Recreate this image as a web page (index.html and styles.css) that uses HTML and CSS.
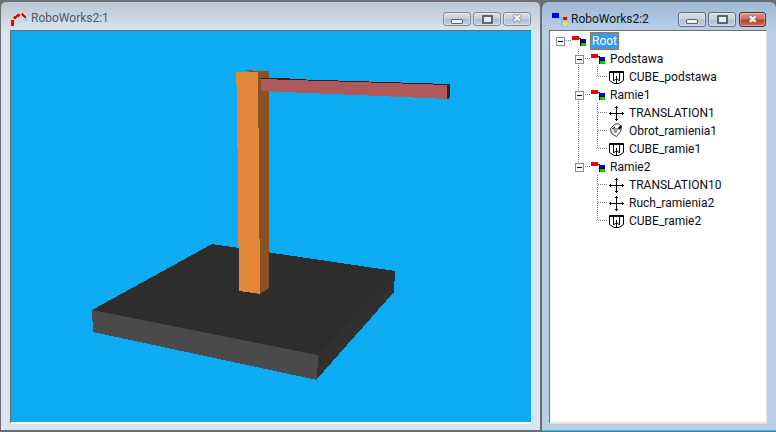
FILE: index.html
```html
<!DOCTYPE html>
<html lang="pl">
<head>
<meta charset="utf-8">
<title>RoboWorks2</title>
<link rel="stylesheet" href="styles.css">
</head>
<body>
<svg class="defs" width="0" height="0" aria-hidden="true">
  <symbol id="flag" viewBox="0 0 16 18">
    <rect x="1" y="4" width="7" height="4" fill="#f00000"/>
    <rect x="8" y="6" width="2" height="1" fill="#000"/>
    <rect x="9" y="6" width="1" height="8" fill="#000"/>
    <rect x="10" y="7" width="5" height="3" fill="#0000e0"/>
    <rect x="10" y="10" width="5" height="1" fill="#000"/>
    <rect x="10" y="11" width="5" height="3" fill="#00d000"/>
  </symbol>
  <symbol id="cross" viewBox="0 0 16 18">
    <path d="M8.500 2V16M2 9.500H15" stroke="#000" fill="none"/>
    <path d="M7 3H10V4H7ZM8 2H9V3H8ZM7 15H10V16H7ZM8 16H9V17H8ZM2 8V11H3V8ZM1 9V10H2V9ZM14 8V11H15V8ZM15 9V10H16V9Z" fill="#000"/>
  </symbol>
  <symbol id="cube" viewBox="0 0 16 18">
    <path d="M1.500 3.500H15.500V12.500L11 15.500H6L1.500 12.500Z" fill="#fff" stroke="#000"/>
    <path d="M1 4.500H16" stroke="#000"/>
    <path d="M5.500 4V13M11.500 4V13M8.500 8V15M5.500 13L8.500 10.500L11.500 13" stroke="#000" fill="none"/>
  </symbol>
  <symbol id="rot" viewBox="0 0 16 18">
    <path d="M6.500 2.500L10.500 1.500L13.500 5.500L12.500 9.500L8.500 14.500L3.500 11.500L2.500 6.500Z" fill="#fff" stroke="#333"/>
    <path d="M5 6H10L9 11H6Z" fill="#999"/>
    <path d="M10 6L13 3L14 5L11 8Z" fill="#000"/>
    <path d="M4 7L7 5" stroke="#000"/>
  </symbol>
</svg>

<section class="window inactive">
  <header class="titlebar">
    <svg class="app-icon" width="17" height="16" viewBox="0 0 17 16" aria-hidden="true" shape-rendering="crispEdges">
      <path d="M2 7L9 2" stroke="#f00000" stroke-width="2.500"/>
      <path d="M11 2L15 6" stroke="#f00000" stroke-width="2"/>
      <rect x="0" y="8" width="3" height="6" fill="#f00000"/>
      <rect x="0" y="6" width="3" height="2" fill="#f0e020"/>
      <rect x="8" y="0" width="3" height="2" fill="#f0e020"/>
      <path d="M14 6h1v1h1v2h-1V8h-1Z" fill="#30e0f0"/>
    </svg>
    <span class="title">RoboWorks2:1</span>
    <div class="controls">
      <span class="btn"><i class="min"></i></span>
      <span class="btn"><i class="max"></i></span>
      <span class="btn"><b class="x">✖</b></span>
    </div>
  </header>
  <div class="client viewport">
    <svg class="scene" width="521" height="392" viewBox="10 30 521 392" shape-rendering="crispEdges" aria-hidden="true">
      <polygon points="212,244 395,271 394,292 316,380 318,355" fill="#303030"/>
      <polygon points="92,310 318,355 317,380 93,332" fill="#4a4a4a"/>
      <polygon points="212,244 395,271 318,355 92,310" fill="#2d2d2d"/>
      <polygon points="239,71 246,71 246,70 253,70 253,71 269,71 269,288 260,294 258,72" fill="#8a5223"/>
      <polygon points="261,78 449,84 449,99 261,91" fill="#ae5a5c"/>
      <polygon points="261,78 290,78.500 290,79 449,84 449,85 261,79" fill="#3c1d1e"/>
      <polygon points="447,85 450,84 450,95 449,99 447,99" fill="#3c1d1e"/>
      <polygon points="236,72 258,72 260,294 239,291 237,100" fill="#e2883a"/>
    </svg>
  </div>
</section>

<section class="window active">
  <header class="titlebar">
    <svg class="app-icon" width="16" height="14" viewBox="0 0 16 14" aria-hidden="true" shape-rendering="crispEdges">
      <rect x="0" y="0" width="7" height="5" fill="#0000f0"/>
      <rect x="9" y="4" width="1" height="8" fill="#20e0f0"/>
      <rect x="7" y="4" width="2" height="1" fill="#20e0f0"/>
      <rect x="10" y="11" width="1" height="1" fill="#20e0f0"/>
      <rect x="11" y="4" width="4" height="3" fill="#f00000"/>
      <rect x="11" y="9" width="4" height="3" fill="#f8f000"/>
    </svg>
    <span class="title">RoboWorks2:2</span>
    <div class="controls">
      <span class="btn"><i class="min"></i></span>
      <span class="btn"><i class="max"></i></span>
      <span class="btn close"><b class="x">✖</b></span>
    </div>
  </header>
  <div class="client tree">
    <svg class="lines" width="218" height="392" viewBox="549 31 218 392" aria-hidden="true">
      <path d="M564 41.500H571M578.500 50V167M583 59.500H590M583 95.500H590M583 167.500H590M597.500 68V77M597.500 104V149M597.500 176V221M598 77.500H608M598 113.500H608M598 131.500H608M598 149.500H608M598 185.500H608M598 203.500H608M598 221.500H608" fill="none" stroke="#777" stroke-dasharray="1 1"/>
    </svg>
    <ul class="nodes">
      <li class="row lv0"><span class="box"></span><svg class="ico"><use href="#flag"/></svg><span class="label selected">Root</span></li>
      <li class="row lv1"><span class="box"></span><svg class="ico"><use href="#flag"/></svg><span class="label">Podstawa</span></li>
      <li class="row lv2"><svg class="ico"><use href="#cube"/></svg><span class="label">CUBE_podstawa</span></li>
      <li class="row lv1"><span class="box"></span><svg class="ico"><use href="#flag"/></svg><span class="label">Ramie1</span></li>
      <li class="row lv2"><svg class="ico"><use href="#cross"/></svg><span class="label">TRANSLATION1</span></li>
      <li class="row lv2"><svg class="ico"><use href="#rot"/></svg><span class="label">Obrot_ramienia1</span></li>
      <li class="row lv2"><svg class="ico"><use href="#cube"/></svg><span class="label">CUBE_ramie1</span></li>
      <li class="row lv1"><span class="box"></span><svg class="ico"><use href="#flag"/></svg><span class="label">Ramie2</span></li>
      <li class="row lv2"><svg class="ico"><use href="#cross"/></svg><span class="label">TRANSLATION10</span></li>
      <li class="row lv2"><svg class="ico"><use href="#cross"/></svg><span class="label">Ruch_ramienia2</span></li>
      <li class="row lv2"><svg class="ico"><use href="#cube"/></svg><span class="label">CUBE_ramie2</span></li>
    </ul>
  </div>
</section>
</body>
</html>
```

FILE: styles.css
```css
* { box-sizing: border-box; }
html, body {
  margin: 0;
  width: 776px;
  height: 432px;
  overflow: hidden;
  background: #6b6f73;
  font-family: Roboto, "Noto Sans", sans-serif;
}
.defs { position: absolute; }

.window {
  position: absolute;
  display: flex;
  flex-direction: column;
  border-radius: 6px 6px 0 0;
}
.window.inactive {
  left: 0;
  top: 1px;
  width: 541px;
  height: 430px;
  padding: 0 9px 6px 9px;
  border: 1px solid #6e6e6e;
  background: linear-gradient(#bac7d4 0, #d9e5f1 30px, #d9e5f1 100%);
}
.window.active {
  left: 542px;
  top: 2px;
  width: 234px;
  height: 429px;
  padding: 0 9px 6px 7px;
  background: linear-gradient(#a0b8d4 0, #b9cfe8 30px, #b9cfe8 100%);
  box-shadow: 0 0 0 1px #5b7187, -1px 0 0 0 #111;
  border-bottom: 1px solid #2ac4e6;
}

.titlebar {
  flex: none;
  height: 28px;
  display: flex;
  align-items: center;
  position: relative;
}
.app-icon { flex: none; margin-top: 8px; }
.inactive .app-icon { margin-left: 1px; margin-right: 3px; }
.active .app-icon { margin-left: 3px; margin-right: 3px; }
.title { font-size: 12px; line-height: 16px; white-space: nowrap; }
.inactive .title { color: #4e5a68; margin-top: 4px; }
.active .title { color: #10141c; margin-top: 6px; }

.controls {
  margin-left: auto;
  display: flex;
  gap: 2px;
}
.inactive .controls { margin-top: 6px; }
.active .controls { margin-top: 7px; margin-right: 1px; }
.btn {
  width: 28px;
  height: 14px;
  border: 1px solid #7f8b98;
  border-radius: 3px;
  background: linear-gradient(#d6e0ea 0, #c2ced9 50%, #aebccb 51%, #c6d3e0 100%);
  display: flex;
  align-items: center;
  justify-content: center;
  box-shadow: inset 0 0 0 1px rgba(255, 255, 255, .35);
}
.active .btn { border-color: #5f6f83; height: 15px; }
.active .btn.close { width: 27px; margin-left: 1px; }
.btn.close {
  background: linear-gradient(#dc9a8c 0, #cf6b5b 48%, #b83a28 52%, #d2705c 100%);
  border-color: #57302e;
}
.min {
  display: block;
  width: 12px;
  height: 5px;
  margin-top: 4px;
  border: 1px solid #5a6470;
  border-radius: 1px;
  background: #eef2f6;
}
.max {
  display: block;
  width: 11px;
  height: 9px;
  border: 2px solid #5a6470;
  border-radius: 1px;
  background: #e6edf3;
}
.x {
  font: bold 11px/12px "DejaVu Sans", sans-serif;
  color: #eef2f6;
  text-shadow: 0 0 1px #3a3f48, 0 0 1px #3a3f48;
}

.client {
  flex: 1;
  min-height: 0;
  position: relative;
}
.viewport {
  background: #0dacf2;
  border-top: 1px solid #6d6d6d;
  border-left: 1px solid #6d6d6d;
  border-bottom: 2px solid #fff;
  overflow: hidden;
}
.scene { display: block; margin: -1px 0 0 -1px; }

.tree {
  background: #fff;
  border-left: 1px solid #6d6d6d;
  border-top: 1px solid #6d6d6d;
  border-right: 1px solid #e4e4e4;
  border-bottom: 2px solid #e2e2e2;
  overflow: hidden;
}
.lines { position: absolute; left: -1px; top: -1px; }
.nodes {
  position: relative;
  list-style: none;
  margin: 0;
  padding: 1px 0 0;
}
.row {
  height: 18px;
  display: flex;
  align-items: center;
  white-space: nowrap;
}
.lv0 { padding-left: 6px; }
.lv1 { padding-left: 25px; }
.lv2 { padding-left: 58px; }
.box {
  flex: none;
  width: 9px;
  height: 9px;
  margin: 1px 6px 0 0;
  border: 1px solid #8a8a8a;
  background: linear-gradient(#000, #000) center / 5px 1px no-repeat #fff;
}
.ico { flex: none; width: 16px; height: 18px; margin-right: 3px; }
.lv1 .ico { margin-right: 2px; }
.label {
  font-size: 12px;
  line-height: 18px;
  color: #0c0c18;
  padding: 0 2px;
}
.label.selected {
  color: #fff;
  background: #3399ff;
  outline: 1px dotted #c06a00;
  outline-offset: -1px;
}
```
